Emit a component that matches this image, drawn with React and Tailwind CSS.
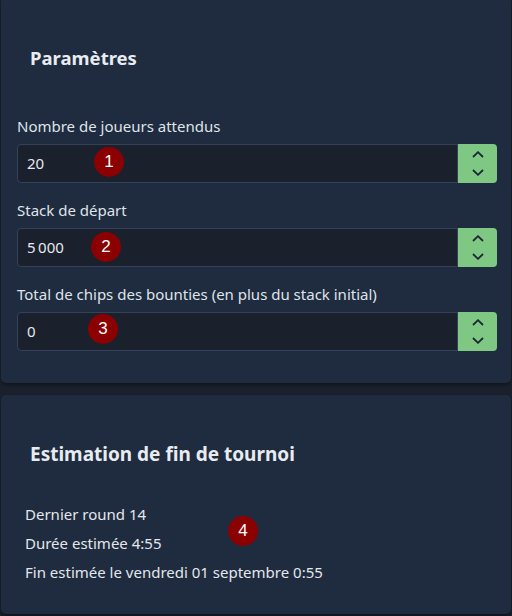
import React from "react";

function Badge({ n, className }) {
  return (
    <div
      className={
        "absolute flex h-[30px] w-[30px] items-center justify-center rounded-full bg-[#8b0000] text-[17px] text-white " +
        className
      }
      style={{ fontFamily: '"Liberation Sans", Arial, sans-serif' }}
    >
      {n}
    </div>
  );
}

function Chevrons() {
  return (
    <div className="flex h-full w-[39px] flex-col items-center justify-center gap-[11px] rounded-r-[4px] bg-[#7fc883]">
      <svg width="12" height="7" viewBox="0 0 12 7" fill="none">
        <path d="M1 6 L6 1.2 L11 6" stroke="#1f2633" strokeWidth="1.8" />
      </svg>
      <svg width="12" height="7" viewBox="0 0 12 7" fill="none">
        <path d="M1 1 L6 5.8 L11 1" stroke="#1f2633" strokeWidth="1.8" />
      </svg>
    </div>
  );
}

function NumberField({ label, value, badge, badgeClass }) {
  return (
    <div className="flex flex-col">
      <div className="h-[24px] text-[15px] leading-[24px] text-[#dfe4ea]">{label}</div>
      <div className="relative mt-[6px] flex h-[39px] w-[480px]">
        <div className="flex h-full flex-1 items-center rounded-l-[4px] border border-[#33425a] bg-[#1a202c] pl-[9px] text-[15px] text-[#e6e9ee]">
          {value}
        </div>
        <Chevrons />
        <Badge n={badge} className={badgeClass} />
      </div>
    </div>
  );
}

export default function App() {
  return (
    <div
      className="flex h-[616px] w-[512px] flex-col gap-[12px] bg-[#1a202c] px-[1px]"
      style={{ fontFamily: '"Noto Sans", "Open Sans", sans-serif' }}
    >
      <div className="flex h-[383px] flex-col rounded-b-[5px] bg-[#1f2b3e] pl-[16px] shadow-[0_2px_3px_rgba(0,0,0,0.35)]">
        <h2 className="mt-[44px] ml-[13px] h-[28px] text-[18.5px] font-bold leading-[28px] text-[#e8ecf1]">
          Paramètres
        </h2>
        <div className="mt-[42px] flex flex-col gap-[15px]">
          <NumberField label="Nombre de joueurs attendus" value="20" badge="1" badgeClass="left-[77px] top-[3px]" />
          <NumberField label="Stack de départ" value={"5\u202f000"} badge="2" badgeClass="left-[74px] top-[4px]" />
          <NumberField
            label="Total de chips des bounties (en plus du stack initial)"
            value="0"
            badge="3"
            badgeClass="left-[71px] top-[2px]"
          />
        </div>
      </div>
      <div className="relative flex h-[219px] flex-col rounded-[5px] bg-[#1f2b3e] pl-[29px] shadow-[0_2px_3px_rgba(0,0,0,0.35)]">
        <h2 className="mt-[45px] h-[28px] text-[19px] font-bold leading-[28px] text-[#e8ecf1]">
          Estimation de fin de tournoi
        </h2>
        <div className="mt-[32px] ml-[-5px] flex flex-col text-[15px] leading-[29px] text-[#e3e7ec]">
          <div>Dernier round 14</div>
          <div>Durée estimée 4:55</div>
          <div>Fin estimée le vendredi 01 septembre 0:55</div>
        </div>
        <Badge n="4" className="left-[227px] top-[121px]" />
      </div>
    </div>
  );
}
